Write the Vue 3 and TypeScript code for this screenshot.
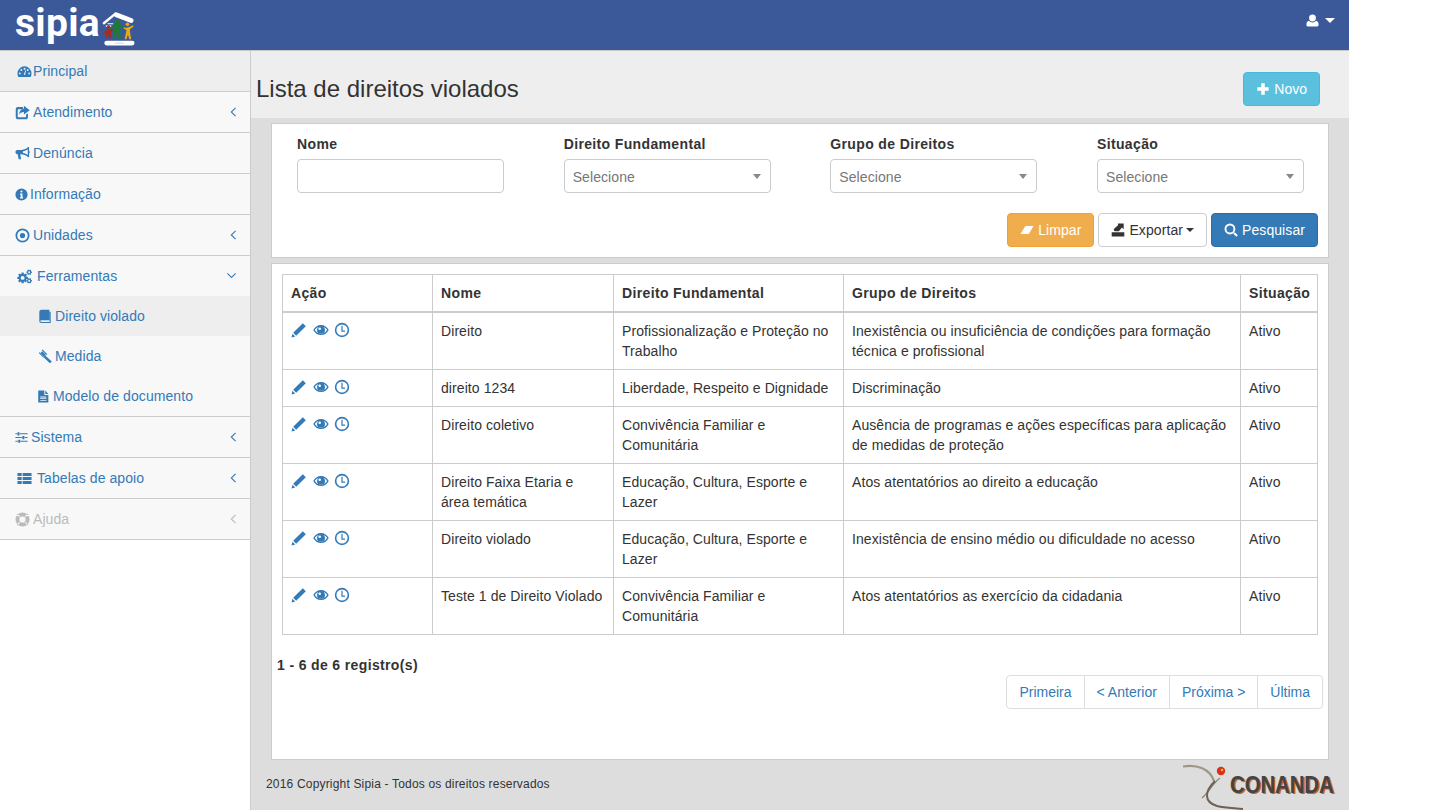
<template>
  <div class="app">
    <header class="navbar">
      <div class="brand">
        <span class="brand-name">sipia</span>
        <svg class="brand-mark" viewBox="0 0 36 38">
          <path d="M16 5 L32 11" stroke="#fff" stroke-width="5" stroke-linecap="round" fill="none" />
          <path d="M3 14 L15 4" stroke="#fff" stroke-width="2.500" stroke-linecap="round" fill="none" />
          <path d="M7 14.500 H13 M5 17 H11" stroke="#fff" stroke-width="1.300" fill="none" />
          <path d="M6 35 H33" stroke="#fff" stroke-width="5" stroke-linecap="round" fill="none" />
          <path d="M15 35 H24" stroke="#c8d0e0" stroke-width="1" fill="none" />
          <g transform="translate(1 2)" fill="#a82a22">
            <circle cx="7" cy="16" r="1.800" />
            <path d="M1 22 L6 18.500 L11 18 L14 16 L14.500 17.500 L10 20.500 L10 28 L8 28 L7 24 L5.500 28 L3.500 28 L4 21.500 L1.500 23z" />
          </g>
          <g transform="translate(-1 2)" fill="#1f7a3a">
            <circle cx="18" cy="10" r="2.400" />
            <path d="M10 17 L16 12.500 L21 12.500 L26 16 L25 17.500 L21.500 15.500 L22 28 L19 28 L18 21 L16 28 L13 28 L15 16 L11 18.500z" />
          </g>
          <g transform="translate(0 1)" fill="#e8a912">
            <circle cx="28" cy="14" r="1.900" />
            <path d="M24 17 L26 18 L30 17 L34 15 L34.500 16.500 L30.500 19.500 L31 24 L32 30 L30 30 L28.500 25 L27 30 L25 30 L27 20.500 L24 18.500z" />
          </g>
        </svg>
      </div>
      <div class="user-menu">
        <svg class="icon user-icon" viewBox="0 0 16 16"><path :d="icons.user" /></svg>
        <span class="caret"></span>
      </div>
    </header>

    <div class="layout">
      <nav class="sidebar">
        <template v-for="item in menu" :key="item.label">
          <a :class="['menu-item', { current: item.current, muted: item.muted }]">
            <svg class="icon" viewBox="0 0 16 16" :style="iconStyle(item)">
              <path :d="icons[item.icon]" fill-rule="evenodd" />
            </svg>
            <span class="menu-label">{{ item.label }}</span>
            <svg v-if="item.arrow" class="chevron" viewBox="0 0 16 16">
              <path :d="item.open ? chevronDown : chevronLeft" />
            </svg>
          </a>
          <div v-if="item.children" class="submenu">
            <a
              v-for="child in item.children"
              :key="child.label"
              :class="['sub-item', { active: child.active }]"
            >
              <svg class="icon" viewBox="0 0 16 16" :style="iconStyle(child)">
                <path :d="icons[child.icon]" fill-rule="evenodd" />
              </svg>
              <span>{{ child.label }}</span>
            </a>
          </div>
        </template>
      </nav>

      <main class="content">
        <div class="page-head">
          <h1>Lista de direitos violados</h1>
          <button class="btn btn-info">
            <svg class="icon plus" viewBox="0 0 16 16"><path :d="icons.plus" /></svg>
            Novo
          </button>
        </div>

        <section class="panel filters">
          <div class="filter-grid">
            <div class="field">
              <label>Nome</label>
              <input type="text" class="control" />
            </div>
            <div v-for="name in selects" :key="name" class="field">
              <label>{{ name }}</label>
              <div class="control select">
                <span>Selecione</span>
                <span class="select-arrow"></span>
              </div>
            </div>
          </div>
          <div class="filter-actions">
            <button class="btn btn-warning">
              <svg class="icon wide" viewBox="0 0 16 16"><path :d="icons.eraser" /></svg>
              Limpar
            </button>
            <button class="btn btn-default">
              <svg class="icon wide" viewBox="0 0 16 16"><path :d="icons.export" /></svg>
              Exportar
              <span class="caret small"></span>
            </button>
            <button class="btn btn-primary">
              <svg class="icon wide" viewBox="0 0 16 16"><path :d="icons.search" fill-rule="evenodd" /></svg>
              Pesquisar
            </button>
          </div>
        </section>

        <section class="panel results">
          <table class="grid">
            <colgroup>
              <col style="width: 150px" />
              <col style="width: 181px" />
              <col style="width: 230px" />
              <col style="width: 397px" />
              <col style="width: 77px" />
            </colgroup>
            <thead>
              <tr>
                <th>Ação</th>
                <th>Nome</th>
                <th>Direito Fundamental</th>
                <th>Grupo de Direitos</th>
                <th>Situação</th>
              </tr>
            </thead>
            <tbody>
              <tr v-for="row in rows" :key="row.nome">
                <td>
                  <div class="actions">
                    <svg class="icon" viewBox="0 0 16 16"><path :d="icons.pencil" /></svg>
                    <svg class="icon" viewBox="0 0 16 16"><path :d="icons.eye" fill-rule="evenodd" /></svg>
                    <svg class="icon" viewBox="0 0 16 16"><path :d="icons.clock" fill-rule="evenodd" /></svg>
                  </div>
                </td>
                <td>{{ row.nome }}</td>
                <td>{{ row.direito }}</td>
                <td>{{ row.grupo }}</td>
                <td>{{ row.situacao }}</td>
              </tr>
            </tbody>
          </table>
          <div class="table-foot">
            <p class="count">1 - 6 de 6 registro(s)</p>
            <ul class="pagination">
              <li v-for="page in pages" :key="page"><a>{{ page }}</a></li>
            </ul>
          </div>
        </section>

        <footer class="page-foot">
          <span>2016 Copyright Sipia - Todos os direitos reservados</span>
          <div class="conanda">
            <svg class="conanda-mark" viewBox="0 0 62 46">
              <path d="M0 2.500 C14 0 27 5 31 17" stroke="#a09684" stroke-width="2.200" fill="none" />
              <path d="M37 14 C30 19 26 28 19 34" stroke="#8a8070" stroke-width="1.300" fill="none" />
              <path d="M32 17 C21 28 21 38 34 42 C42 44 50 44 60 45" stroke="#6d6253" stroke-width="2" fill="none" />
              <circle cx="38" cy="7" r="4.200" fill="#d8301c" />
              <circle cx="39" cy="6" r="1.300" fill="#f0b020" />
            </svg>
            <span class="conanda-name">CONANDA</span>
          </div>
        </footer>
      </main>
    </div>
  </div>
</template>

<script setup lang="ts">
interface SubItem {
  label: string;
  icon: string;
  iconLeft: number;
  textLeft: number;
  size?: number;
  active?: boolean;
}

interface MenuItem extends SubItem {
  arrow?: boolean;
  open?: boolean;
  current?: boolean;
  muted?: boolean;
  children?: SubItem[];
}

// icon sits at iconLeft, label starts at textLeft
function iconStyle(item: SubItem) {
  const size = item.size ?? 15;
  return {
    width: size + 'px',
    height: size + 'px',
    marginLeft: item.iconLeft - 0.5 + 'px',
    marginRight: item.textLeft - item.iconLeft - size + 0.5 + 'px',
  };
}

// ring helper, everything goes in one evenodd path
function circle(cx: number, cy: number, r: number) {
  return `M${cx - r} ${cy}a${r} ${r} 0 1 0 ${2 * r} 0a${r} ${r} 0 1 0 ${-2 * r} 0z`;
}

function gear(cx: number, cy: number, r: number, teeth: number) {
  const pts: string[] = [];
  const step = (Math.PI * 2) / teeth;
  for (let i = 0; i < teeth; i++) {
    const a = i * step;
    const steps: [number, number][] = [
      [-0.32, r * 0.74],
      [-0.2, r],
      [0.2, r],
      [0.32, r * 0.74],
    ];
    for (const [off, rad] of steps) {
      const t = a + off * step * 1.2;
      pts.push(`${(cx + Math.cos(t) * rad).toFixed(2)} ${(cy + Math.sin(t) * rad).toFixed(2)}`);
    }
  }
  return `M${pts.join('L')}z${circle(cx, cy, r * 0.36)}`;
}

const chevronLeft = 'M10.200 3.500L5.500 8l4.700 4.500.8-.8L7.100 8l3.900-3.700z';
const chevronDown = 'M2 5.800L6.500 10.300l4.500-4.500-.8-.8L6.500 8.700 2.800 5z';

const icons: Record<string, string> = {
  dashboard:
    'M8 2.500A7.500 7.500 0 0 0 .5 10c0 1.400.4 2.700 1 3.800h13c.6-1.100 1-2.400 1-3.800A7.500 7.500 0 0 0 8 2.500z' +
    circle(3, 10, 1) + circle(4.600, 6.400, 1) + circle(8, 5, 1) + circle(13, 10, 1) + circle(11.400, 6.400, 1) +
    'M7.200 11.500L9 6.500l.6.2-1 5z',
  share:
    'M.8 4.500C.8 3.200 1.800 2.200 3 2.200h5.500v2.200H3.600c-.4 0-.7.3-.7.7v7.300c0 .4.3.7.7.7H11c.4 0 .7-.3.7-.7V10.500l2.100-1.600v4.100c0 1.300-1 2.300-2.200 2.300H3c-1.200 0-2.200-1-2.200-2.300z' +
    'M9.500 .8L15.700 5.500 9.500 10.200V7.500C7 7.500 5.300 8.300 4.500 10.500 4.500 6.800 6.500 4.200 9.500 3.800z',
  bullhorn:
    'M15 1h-1c-1.800 1.800-4 2.800-7 3.200H2.500C1.400 4.200.5 5.100.5 6.500S1.400 8.800 2.500 8.800h.4l1 5.200h2.600L5.600 8.900H7c3 .4 5.200 1.400 7 3.100h1V7.800c.5-.3.800-.8.800-1.300s-.3-1-.8-1.300z' +
    'M13.600 3.400c-1.400 1.100-3 1.800-5.100 2.200v1.800c2.100.4 3.700 1.100 5.100 2.200z',
  info: circle(8, 8, 7.500) + circle(8, 4.300, 1.300) + 'M6.200 6.700h3v4.600h.8V12.800H6.200V11.300H7V8.200H6.200z',
  dot: circle(8, 8, 7.500) + circle(8, 8, 5.600) + circle(8, 8, 2.800),
  gears: gear(6, 9.500, 5.800, 8) + gear(13, 3.500, 3, 6) + gear(13, 12.500, 3, 6),
  book: 'M1.500 3.300C1.500 1.900 2.500 .8 3.800 .8H13v12H4c-.9 0-1.300.4-1.300 1s.4 1 1.300 1h9.200V3h1.300v12.800c0 .1 0 .2-.1.200H3.800c-1.300 0-2.300-.9-2.300-2.200z',
  gavel:
    'M5.500 2.500L9.500 6.500 7.500 8.500 3.500 4.500z M6 .5L11 5.500 10.100 6.400 5.100 1.400z M2.800 3.400L7.800 8.400 6.900 9.300 1.900 4.300z' +
    'M8.800 7L15.800 13.300 13.800 15.300 7 8.800z',
  file:
    'M1.500 .5H9V6h5v9.500H1.500z M10.200 .5L14 4.800h-3.800z' +
    'M4 8h7.500v1.100H4z M4 10.100h7.500v1.100H4z M4 12.200h7.500v1.100H4z',
  sliders:
    'M.5 2.800h2V4H.5z M6 2.800h9.500V4H6z M3 1.500h2.500v3.900H3z' +
    'M.5 7.400h8V8.600h-8z M12 7.400h3.500V8.600H12z M9 6.100h2.500V10H9z' +
    'M.5 12h3V13.200h-3z M7 12h8.500V13.200H7z M4 10.700h2.500v3.900H4z',
  list:
    'M.5 2h4.500v3.300H.5z M6 2h9.500v3.300H6z M.5 6.300h4.500v3.300H.5z M6 6.300h9.500v3.300H6z M.5 10.600h4.500v3.300H.5z M6 10.600h9.500v3.300H6z',
  life:
    circle(8, 8, 7.500) + circle(8, 8, 3.300) +
    'M2.600 1.700L5.700 5 5 5.700 1.700 2.600z M13.400 1.700L14.300 2.600 11 5.700 10.300 5z M2.600 14.300L1.700 13.400 5 10.300 5.700 11z M13.400 14.300L10.300 11 11 10.300 14.300 13.400z',
  plus: 'M6 1.500h4V6h4.500v4H10v4.500H6V10H1.500V6H6z',
  user: 'M8 1.500a3.600 3.600 0 0 1 3.600 3.800A3.600 3.600 0 0 1 8 9a3.600 3.600 0 0 1-3.600-3.700A3.600 3.600 0 0 1 8 1.500z M4.300 8.300C5.200 9.300 6.500 10 8 10s2.800-.7 3.700-1.700c1.900.3 2.800 2 2.800 4.300 0 1.200-.8 1.900-1.900 1.900H3.400c-1.100 0-1.900-.7-1.900-1.900 0-2.300.9-4 2.800-4.300z',
  eraser: 'M6.200 3.500H15.500L10 12.500H.5z',
  export: 'M8 .5H14.500V7L12.500 5 9 9.500H4.500L3 8 3.500 6.500 8 2.500z M.8 10.500H15.200V15.500H.8z',
  search: circle(6.800, 6.800, 6.200) + circle(6.800, 6.800, 4) + 'M10.600 12.300L12.300 10.600 15.800 14.100 14.100 15.800z',
  pencil: 'M11.800 1.200L14.800 4.200 5.200 13.800 2.200 10.800z M1.500 11.800L4.200 14.500.5 15.500z',
  eye:
    'M8 3C4.500 3 1.800 5 .3 8c1.500 3 4.200 5 7.700 5s6.200-2 7.700-5C14.200 5 11.500 3 8 3z' +
    'M1.900 8C2.700 6.600 3.900 5.500 5.300 4.900A4 4 0 0 0 4 8a4 4 0 0 0 8 0 4 4 0 0 0-1.300-3.100C12.100 5.500 13.300 6.600 14.100 8 12.800 10.200 10.600 11.700 8 11.700S3.200 10.200 1.900 8z' +
    circle(6.700, 6.700, 1.300),
  clock: circle(8, 8, 7.200) + circle(8, 8, 5.600) + 'M7.400 3.800h1.200V8.600H11v1.200H7.400z',
};

const menu: MenuItem[] = [
  { label: 'Principal', icon: 'dashboard', iconLeft: 17, textLeft: 33, current: true },
  { label: 'Atendimento', icon: 'share', iconLeft: 15, textLeft: 33, arrow: true },
  { label: 'Denúncia', icon: 'bullhorn', iconLeft: 15, textLeft: 33 },
  { label: 'Informação', icon: 'info', iconLeft: 15, textLeft: 30, size: 13 },
  { label: 'Unidades', icon: 'dot', iconLeft: 15, textLeft: 33, arrow: true },
  {
    label: 'Ferramentas',
    icon: 'gears',
    iconLeft: 17,
    textLeft: 37,
    arrow: true,
    open: true,
    children: [
      { label: 'Direito violado', icon: 'book', iconLeft: 38, textLeft: 55, size: 14, active: true },
      { label: 'Medida', icon: 'gavel', iconLeft: 37, textLeft: 55 },
      { label: 'Modelo de documento', icon: 'file', iconLeft: 37, textLeft: 53, size: 13 },
    ],
  },
  { label: 'Sistema', icon: 'sliders', iconLeft: 15, textLeft: 31, size: 13, arrow: true },
  { label: 'Tabelas de apoio', icon: 'list', iconLeft: 17, textLeft: 37, arrow: true },
  { label: 'Ajuda', icon: 'life', iconLeft: 15, textLeft: 33, arrow: true, muted: true },
];

const selects = ['Direito Fundamental', 'Grupo de Direitos', 'Situação'];

const rows = [
  {
    nome: 'Direito',
    direito: 'Profissionalização e Proteção no Trabalho',
    grupo: 'Inexistência ou insuficiência de condições para formação técnica e profissional',
    situacao: 'Ativo',
  },
  {
    nome: 'direito 1234',
    direito: 'Liberdade, Respeito e Dignidade',
    grupo: 'Discriminação',
    situacao: 'Ativo',
  },
  {
    nome: 'Direito coletivo',
    direito: 'Convivência Familiar e Comunitária',
    grupo: 'Ausência de programas e ações específicas para aplicação de medidas de proteção',
    situacao: 'Ativo',
  },
  {
    nome: 'Direito Faixa Etaria e área temática',
    direito: 'Educação, Cultura, Esporte e Lazer',
    grupo: 'Atos atentatórios ao direito a educação',
    situacao: 'Ativo',
  },
  {
    nome: 'Direito violado',
    direito: 'Educação, Cultura, Esporte e Lazer',
    grupo: 'Inexistência de ensino médio ou dificuldade no acesso',
    situacao: 'Ativo',
  },
  {
    nome: 'Teste 1 de Direito Violado',
    direito: 'Convivência Familiar e Comunitária',
    grupo: 'Atos atentatórios as exercício da cidadania',
    situacao: 'Ativo',
  },
];

const pages = ['Primeira', '< Anterior', 'Próxima >', 'Última'];
</script>

<style scoped>
.app {
  width: 1349px;
  min-height: 810px;
  display: flex;
  flex-direction: column;
  font-family: "Liberation Sans", Arial, sans-serif;
  font-size: 14px;
  line-height: 20px;
  letter-spacing: 0.08px;
  color: #333;
}

.navbar {
  height: 50px;
  box-sizing: content-box;
  background: #3b5998;
  border-bottom: 1px solid #c9c9c9;
  display: flex;
  align-items: center;
  justify-content: space-between;
  padding: 0 14px 0 15px;
}

.brand {
  display: flex;
  align-items: center;
  gap: 1px;
}

.brand-name {
  font-family: Roboto, sans-serif;
  font-size: 39px;
  font-weight: 700;
  line-height: 46px;
  color: #fff;
  letter-spacing: 0.3px;
  margin-bottom: 4px;
}

.brand-mark {
  width: 34px;
  height: 36px;
  margin-top: 5px;
}

.user-menu {
  display: flex;
  align-items: center;
  gap: 5px;
  margin-top: -10px;
  color: #fff;
}

.user-icon {
  width: 14px;
  height: 14px;
}

.icon {
  width: 15px;
  height: 15px;
  flex: none;
  fill: currentColor;
}

.caret {
  width: 0;
  height: 0;
  border-top: 5px solid currentColor;
  border-left: 5px solid transparent;
  border-right: 5px solid transparent;
}

.caret.small {
  display: inline-block;
  border-top-width: 4px;
  border-left-width: 4px;
  border-right-width: 4px;
  margin-left: -1px;
  vertical-align: middle;
}

.layout {
  flex: 1;
  display: flex;
}

.sidebar {
  width: 250px;
  flex: none;
  background: #fff;
  border-right: 1px solid #ccc;
}

.menu-item {
  position: relative;
  height: 40px;
  display: flex;
  align-items: center;
  background: #f8f8f8;
  border-bottom: 1px solid #ccc;
  color: #337ab7;
  box-sizing: content-box;
}

.menu-item.current {
  background: #eee;
}

.menu-item.muted {
  color: #bbb;
}

.chevron {
  position: absolute;
  right: 9px;
  top: 12px;
  width: 16px;
  height: 16px;
  fill: currentColor;
}

.submenu {
  position: relative;
  background: #f8f8f8;
  border-bottom: 1px solid #ccc;
  margin-top: -1px;
}

.sub-item {
  height: 40px;
  display: flex;
  align-items: center;
  color: #337ab7;
}

.sub-item.active {
  background: #eee;
}

.content {
  flex: 1;
  min-width: 0;
  display: flex;
  flex-direction: column;
  background: #ddd;
}

.page-head {
  height: 67px;
  background: #eee;
  display: flex;
  align-items: center;
  justify-content: space-between;
  padding: 0 29px 0 5px;
}

.page-head h1 {
  margin: 8px 0 0;
  font-size: 24px;
  font-weight: 400;
  line-height: 26px;
  letter-spacing: 0;
}

.page-head .btn {
  margin-top: 8px;
  letter-spacing: 0;
}

.btn {
  height: 34px;
  box-sizing: border-box;
  border: 1px solid transparent;
  border-radius: 4px;
  padding: 6px 12px;
  font: inherit;
  letter-spacing: inherit;
  display: inline-flex;
  align-items: center;
  gap: 4px;
  white-space: nowrap;
}

.btn .wide {
  width: 14px;
  height: 14px;
}

.btn-info {
  background: #5bc0de;
  border-color: #46b8da;
  color: #fff;
}

.btn-info .plus {
  width: 14px;
  height: 14px;
}

.btn-warning {
  background: #f0ad4e;
  border-color: #eea236;
  color: #fff;
}

.btn-default {
  background: #fff;
  border-color: #ccc;
  color: #333;
}

.btn-primary {
  background: #337ab7;
  border-color: #2e6da4;
  color: #fff;
}

.panel {
  margin: 5px 20px 0;
  background: #fff;
  border: 1px solid #ccc;
}

.filters {
  height: 135px;
  box-sizing: border-box;
  padding: 10px 10px 0 25px;
}

.filter-grid {
  display: grid;
  grid-template-columns: repeat(4, 207px);
  column-gap: 59.67px;
}

.field label {
  display: block;
  font-weight: 700;
  letter-spacing: 0.36px;
  margin-bottom: 5px;
}

.control {
  display: block;
  width: 207px;
  height: 34px;
  box-sizing: border-box;
  border: 1px solid #ccc;
  border-radius: 4px;
  background: #fff;
  font: inherit;
  padding: 7px 8px 5px;
}

.select {
  display: flex;
  align-items: center;
  justify-content: space-between;
  color: #777;
}

.select-arrow {
  width: 0;
  height: 0;
  margin: -1px 1px 0 0;
  border-top: 5px solid #888;
  border-left: 4px solid transparent;
  border-right: 4px solid transparent;
}

.filter-actions {
  display: flex;
  justify-content: flex-end;
  gap: 4px;
  margin-top: 20px;
}

.results {
  height: 497px;
  box-sizing: border-box;
  padding: 10px;
}

.grid {
  width: 1035px;
  table-layout: fixed;
  border-collapse: collapse;
}

.grid th,
.grid td {
  border: 1px solid #ccc;
  padding: 8px;
  text-align: left;
  vertical-align: top;
}

.grid th {
  border-bottom-width: 2px;
  font-weight: 700;
  letter-spacing: 0.36px;
}

.actions {
  display: flex;
  gap: 5.5px;
  color: #337ab7;
  padding-top: 1px;
}

.actions .icon {
  width: 16px;
  height: 16px;
}

.table-foot {
  margin: 20px -5px 0;
}

.count {
  margin: 0;
  font-weight: 700;
  letter-spacing: 0.36px;
}

.pagination {
  list-style: none;
  display: flex;
  justify-content: flex-end;
  margin: 0;
  padding: 0;
  letter-spacing: 0;
}

.pagination li a {
  display: block;
  height: 34px;
  box-sizing: border-box;
  padding: 6px 12px;
  background: #fff;
  border: 1px solid #ddd;
  margin-left: -1px;
  color: #337ab7;
}

.pagination li:first-child a {
  border-radius: 4px 0 0 4px;
}

.pagination li:last-child a {
  border-radius: 0 4px 4px 0;
}

.page-foot {
  flex: 1;
  display: flex;
  align-items: flex-end;
  justify-content: space-between;
  padding: 0 15px 0 15px;
  font-size: 12px;
  letter-spacing: 0.18px;
}

.page-foot > span {
  padding-bottom: 16px;
}

.conanda {
  display: flex;
  align-items: flex-end;
  height: 46px;
}

.conanda-mark {
  width: 62px;
  height: 46px;
}

.conanda-name {
  margin: 0 0 13px -34px;
  font-family: "Liberation Sans", sans-serif;
  font-size: 24px;
  font-weight: 700;
  line-height: 24px;
  letter-spacing: 0;
  color: #444;
  text-shadow: 2px 1px 0 #c8622c;
  transform: scaleX(0.845);
  transform-origin: right center;
}
</style>

<style>
body {
  background: #fff;
}
</style>
